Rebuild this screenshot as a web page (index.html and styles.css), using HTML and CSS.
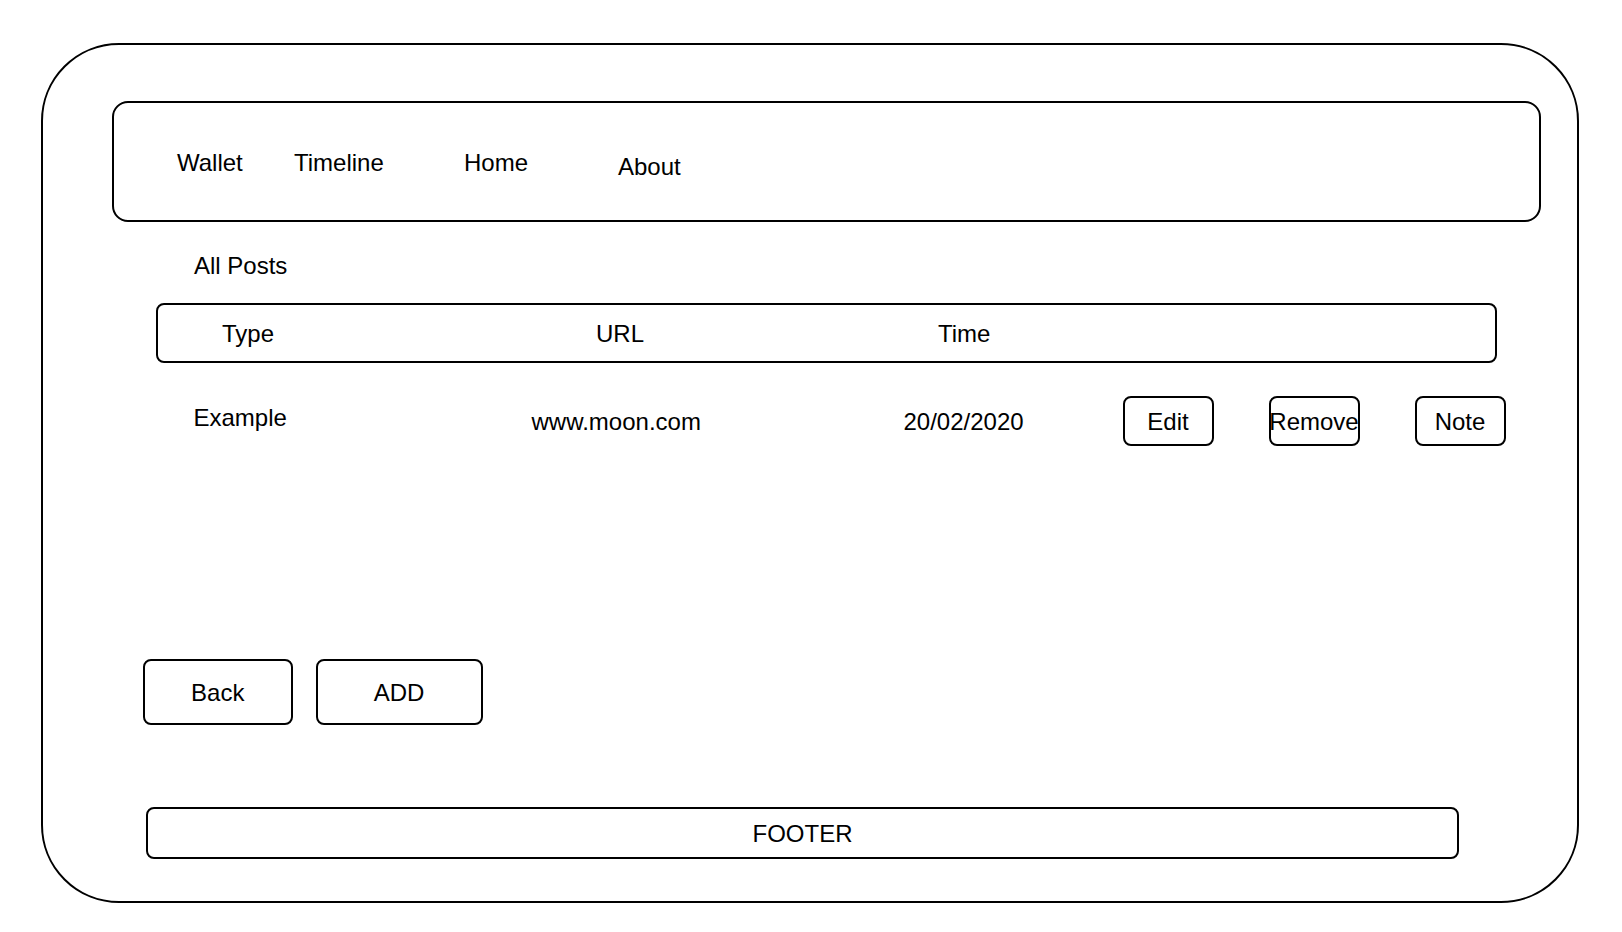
FILE: index.html
```html
<!DOCTYPE html>
<html lang="en">
<head>
<meta charset="utf-8">
<title>All Posts</title>
<link rel="stylesheet" href="styles.css">
</head>
<body>
<div class="frame">
  <nav class="nav">
    <a class="nav-item nav-wallet">Wallet</a>
    <a class="nav-item nav-timeline">Timeline</a>
    <a class="nav-item nav-home">Home</a>
    <a class="nav-item nav-about">About</a>
  </nav>

  <div class="section-title">All Posts</div>

  <div class="table-head">
    <span class="col-type">Type</span>
    <span class="col-url">URL</span>
    <span class="col-time">Time</span>
  </div>

  <div class="table-row">
    <span class="cell-type">Example</span>
    <span class="cell-url">www.moon.com</span>
    <span class="cell-time">20/02/2020</span>
    <div class="row-actions">
      <button class="btn btn-small">Edit</button>
      <button class="btn btn-small">Remove</button>
      <button class="btn btn-small">Note</button>
    </div>
  </div>

  <div class="bottom-actions">
    <button class="btn btn-back">Back</button>
    <button class="btn btn-add">ADD</button>
  </div>

  <footer class="footer">FOOTER</footer>
</div>
</body>
</html>
```

FILE: styles.css
```css
html, body {
  margin: 0;
  padding: 0;
  background: #ffffff;
}

body {
  font-family: "Liberation Sans", Arial, Helvetica, sans-serif;
  font-size: 24px;
  line-height: 28px;
  color: #000000;
}

.frame {
  box-sizing: border-box;
  width: 1538px;
  height: 860px;
  margin: 43px 0 0 41px;
  border: 2px solid #000;
  border-radius: 78px;
  display: flex;
  flex-direction: column;
  align-items: flex-start;
}

/* navigation bar */
.nav {
  box-sizing: border-box;
  width: 1428.5px;
  height: 121px;
  margin: 56px 0 0 69px;
  padding: 46px 0 0 63px;
  border: 2px solid #000;
  border-radius: 16px;
  display: flex;
  align-items: flex-start;
}

.nav-item {
  display: block;
  white-space: nowrap;
}

.nav-wallet { width: 117px; }
.nav-timeline { width: 170px; }
.nav-home { width: 154px; }
.nav-about { margin-top: 3.5px; }

/* title */
.section-title {
  margin: 30px 0 0 151px;
}

/* table header */
.table-head {
  box-sizing: border-box;
  width: 1341px;
  height: 60px;
  margin: 23px 0 0 113px;
  padding: 1px 0 0 64px;
  border: 2px solid #000;
  border-radius: 8px;
  display: flex;
  align-items: center;
}

.col-type { width: 374px; }
.col-url { width: 342px; }

/* table row */
.table-row {
  height: 50px;
  margin-top: 33px;
  padding-left: 150.5px;
  display: flex;
  align-items: center;
}

.cell-type {
  width: 338px;
  align-self: flex-start;
  margin-top: 8px;
}

.cell-url { width: 372px; padding-top: 2px; }
.cell-time { width: 219px; padding-top: 2px; }

.row-actions {
  display: flex;
  gap: 55px;
}

/* buttons */
.btn {
  box-sizing: border-box;
  margin: 0;
  padding: 2px 0 0;
  font: inherit;
  color: #000;
  background: #fff;
  border: 2px solid #000;
  border-radius: 8px;
  display: flex;
  align-items: center;
  justify-content: center;
  white-space: nowrap;
}

.btn-small {
  width: 91px;
  height: 50px;
}

.bottom-actions {
  display: flex;
  gap: 22.5px;
  margin: 213px 0 0 99.5px;
}

.btn-back {
  width: 150.5px;
  height: 66px;
}

.btn-add {
  width: 167px;
  height: 66px;
}

/* footer */
.footer {
  box-sizing: border-box;
  width: 1313px;
  height: 52px;
  margin: 82px 0 0 103px;
  padding-top: 2px;
  border: 2px solid #000;
  border-radius: 8px;
  display: flex;
  align-items: center;
  justify-content: center;
}
```
